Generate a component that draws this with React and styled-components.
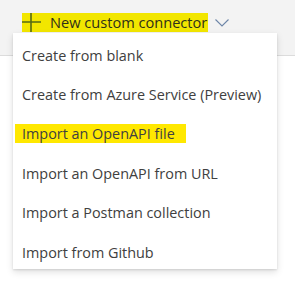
import React from "react";
import styled, { createGlobalStyle } from "styled-components";

const Global = createGlobalStyle`
  html, body { margin: 0; padding: 0; background: #ffffff; }
  body { font-family: "Open Sans", "Noto Sans", "Liberation Sans", sans-serif; }
`;

const Page = styled.div`
  position: relative;
  width: 295px;
  height: 284px;
  overflow: hidden;
  background: #ffffff;
`;

const Header = styled.div`
  height: 56px;
  box-sizing: border-box;
  background: #f3f3f3;
  border-bottom: 1px solid #dcdcdc;
  padding: 12.5px 0 0 22px;
  display: flex;
  align-items: flex-start;
  gap: 7px;
`;

const NewButton = styled.button`
  display: flex;
  align-items: center;
  gap: 9px;
  height: 19px;
  padding: 0 1px 0 0;
  border: none;
  background: #f2e600;
  color: #2f2f1a;
  font-family: inherit;
  font-size: 14.6px;
  line-height: 19px;
  cursor: pointer;
`;

const Chevron = styled.svg`
  margin-top: 6px;
  width: 14px;
  height: 8px;
`;

const Menu = styled.ul`
  position: absolute;
  left: 13px;
  top: 33px;
  width: 264px;
  margin: 0;
  padding: 0;
  list-style: none;
  background: #ffffff;
  box-shadow: 0 3px 7px rgba(0, 0, 0, 0.13), 0 0.6px 1.8px rgba(0, 0, 0, 0.11);
`;

const Item = styled.li`
  box-sizing: border-box;
  height: 39.4px;
  padding: 5px 0 0 9px;
  display: flex;
  align-items: center;
  font-size: 14.4px;
  color: #404040;
`;

const Label = styled.span`
  background: ${(p) => (p.$highlight ? "#ffe800" : "transparent")};
  padding: ${(p) => (p.$highlight ? "1px 11px 1px 7px" : "0")};
  margin-left: ${(p) => (p.$highlight ? "-7px" : "0")};
  line-height: 17px;
`;

const items = [
  "Create from blank",
  "Create from Azure Service (Preview)",
  "Import an OpenAPI file",
  "Import an OpenAPI from URL",
  "Import a Postman collection",
  "Import from Github",
];

export default function App() {
  return (
    <Page>
      <Global />
      <Header>
        <NewButton>
          <svg width="19" height="19" viewBox="0 0 19 19">
            <path d="M9 0V19M0 9H19" stroke="#556b14" strokeWidth="1.6" fill="none" />
          </svg>
          New custom connector
        </NewButton>
        <Chevron viewBox="0 0 14 8">
          <path d="M0.5 0.5L7 7L13.5 0.5" stroke="#6d86a8" strokeWidth="1.1" fill="none" />
        </Chevron>
      </Header>
      <Menu>
        {items.map((t, i) => (
          <Item key={t}>
            <Label $highlight={i === 2}>{t}</Label>
          </Item>
        ))}
      </Menu>
    </Page>
  );
}
